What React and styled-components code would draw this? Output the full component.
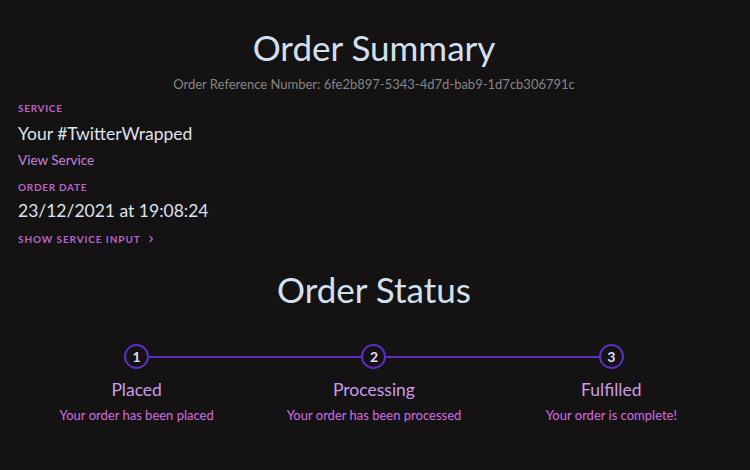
import React from "react"
import styled, { createGlobalStyle } from "styled-components"

const GlobalStyle = createGlobalStyle`
  html, body {
    margin: 0;
    padding: 0;
    background: #141213;
  }
  body {
    font-family: Lato, "Open Sans", sans-serif;
    color: #dde3ec;
  }
`

const Page = styled.div`
  width: 750px;
  height: 470px;
  box-sizing: border-box;
  padding: 24px 20px 0 18px;
  background: #141213;
  overflow: hidden;
`

const Title = styled.h1`
  margin: 0;
  text-align: center;
  font-size: 35px;
  line-height: 46px;
  font-weight: 400;
  color: #d5e0ef;
`

const RefNumber = styled.div`
  margin-top: 6px;
  text-align: center;
  font-size: 13px;
  line-height: 16px;
  color: #858585;
`

const Details = styled.dl`
  margin: 9px 0 0;
  display: flex;
  flex-direction: column;
  align-items: flex-start;
`

const Label = styled.dt`
  font-size: 10px;
  line-height: 14px;
  font-weight: 700;
  letter-spacing: 0.7px;
  text-transform: uppercase;
  color: #b865cc;
  margin-top: ${p => p.$gap || 0}px;
`

const Value = styled.dd`
  margin: ${p => p.$mt ?? 7}px 0 0;
  font-size: 17.5px;
  line-height: 24px;
  color: #dde3ec;
`

const ViewLink = styled.a`
  margin-top: 5px;
  font-size: 13.5px;
  line-height: 18px;
  color: #c583de;
  text-decoration: none;
`

const Toggle = styled.button`
  margin-top: 9px;
  padding: 0;
  border: 0;
  background: none;
  font-family: inherit;
  font-size: 10px;
  line-height: 14px;
  font-weight: 700;
  letter-spacing: 0.9px;
  text-transform: uppercase;
  color: #b865cc;
  display: flex;
  align-items: center;
  gap: 7px;
`

const StatusTitle = styled.h2`
  margin: 22px 0 0;
  text-align: center;
  font-size: 35px;
  line-height: 42px;
  font-weight: 400;
  color: #d5e0ef;
`

const Steps = styled.ol`
  list-style: none;
  margin: 34px 0 0;
  padding: 0;
  display: grid;
  grid-template-columns: repeat(3, 1fr);
`

const Step = styled.li`
  position: relative;
  display: flex;
  flex-direction: column;
  align-items: center;

  &::before {
    content: "";
    position: absolute;
    top: 12px;
    height: 2px;
    background: #5a2fc2;
    left: ${p => (p.$first ? "50%" : "0")};
    right: ${p => (p.$last ? "50%" : "0")};
  }
`

const Circle = styled.span`
  position: relative;
  z-index: 1;
  width: 21px;
  height: 21px;
  border: 2px solid #5a2fc2;
  border-radius: 50%;
  background: #141213;
  display: flex;
  align-items: center;
  justify-content: center;
  font-size: 14px;
  font-weight: 700;
  color: #e6dcf2;
`

const StepName = styled.div`
  margin-top: 9px;
  font-size: 17.5px;
  line-height: 24px;
  color: #c89ee8;
`

const StepText = styled.div`
  margin-top: 4px;
  font-size: 13px;
  line-height: 18px;
  color: #d06ee0;
`

const steps = [
  { name: "Placed", text: "Your order has been placed" },
  { name: "Processing", text: "Your order has been processed" },
  { name: "Fulfilled", text: "Your order is complete!" },
]

export default function App() {
  return (
    <Page>
      <GlobalStyle />
      <Title>Order Summary</Title>
      <RefNumber>Order Reference Number: 6fe2b897-5343-4d7d-bab9-1d7cb306791c</RefNumber>
      <Details>
        <Label>Service</Label>
        <Value>Your #TwitterWrapped</Value>
        <ViewLink href="#">View Service</ViewLink>
        <Label $gap={11}>Order Date</Label>
        <Value $mt={5}>23/12/2021 at 19:08:24</Value>
        <Toggle>
          Show Service Input
          <svg width="6" height="8" viewBox="0 0 6 8" fill="none">
            <path d="M1.5 1l3 3-3 3" stroke="#b865cc" strokeWidth="1.2" />
          </svg>
        </Toggle>
      </Details>
      <StatusTitle>Order Status</StatusTitle>
      <Steps>
        {steps.map((s, i) => (
          <Step key={s.name} $first={i === 0} $last={i === steps.length - 1}>
            <Circle>{i + 1}</Circle>
            <StepName>{s.name}</StepName>
            <StepText>{s.text}</StepText>
          </Step>
        ))}
      </Steps>
    </Page>
  )
}
